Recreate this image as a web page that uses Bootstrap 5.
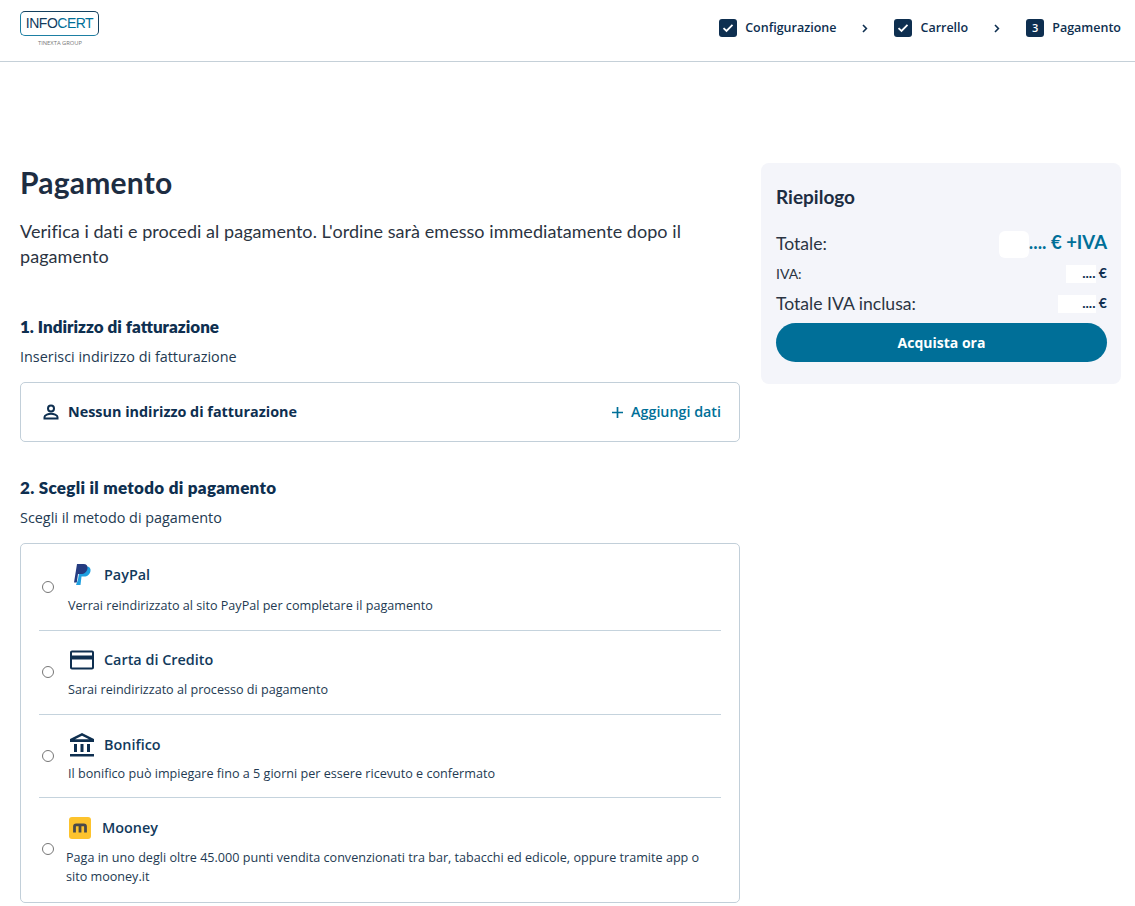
<!DOCTYPE html>
<html lang="it"><head><meta charset="utf-8"><title>Pagamento</title>
<link href="https://cdn.jsdelivr.net/npm/bootstrap@5.3.0/dist/css/bootstrap.min.css" rel="stylesheet">
<style>
body{font-family:"Open Sans","Noto Sans",sans-serif;color:#0e2f50;font-size:14px;background:#fff}
.topbar{height:62px;border-bottom:1px solid #c5d0d8;padding:0 14px 5px 20px}
.logo-wrap{width:80px;margin-top:11px}
.logo-box{height:25px;width:79px;border:1.5px solid;border-color:#14405f #14405f #1d7fa3 #1d7fa3;border-radius:5px;font-family:"Liberation Sans",sans-serif;font-size:14px;line-height:23px;text-align:center;letter-spacing:-.5px;color:#123a5c}
.logo-box b{font-weight:400;color:#006f98}
.logo-sub{font-size:5.8px;color:#777;text-align:center;line-height:8px;margin-top:3px}
.step{font-size:12.5px;font-weight:600;line-height:18px}
.step-box{width:18px;height:18px;border-radius:3px;background:#0e2f50;color:#fff;font-size:11px;font-weight:600}
.chev{margin:0 26px}
.page-main{padding:101px 14px 0 20px;gap:21px}
.leftcol{width:720px}
.rightcol{width:360px}
h1.title{font-family:"Lato",sans-serif;font-size:30px;font-weight:700;color:#1d2d42;margin:1px 0 19px;line-height:36px;letter-spacing:.2px}
.intro{font-family:"Lato",sans-serif;font-size:18px;line-height:25px;color:#2b3442;margin-bottom:47px;letter-spacing:.05px}
.sec-title{font-family:"Lato",sans-serif;font-size:17px;font-weight:800;color:#0e2f50;line-height:22px;margin-bottom:9px}
.sec-wide{letter-spacing:.29px}
.sec-sub{font-size:14.4px;line-height:20px;color:#233a52;margin-bottom:15px}
.addr{height:60px;border:1px solid #c2cfd9;border-radius:5px;padding:0 18px 0 21px;margin-bottom:35px}
.addr-name{font-weight:700;font-size:14.4px}
.add-link{color:#006f98;font-weight:600;font-size:14.3px;text-decoration:none}
.pay-list{border:1px solid #c2cfd9;border-radius:5px;padding:0 18px;height:360px}
.pay-row{border-bottom:1px solid #c5d3dd}
.pay-row:last-child{border-bottom:0}
.radio-dot{width:12px;height:12px;margin:0 14px 0 3px;flex:none}
.r2 .radio-dot{margin-bottom:2px}
.r4 .radio-dot{margin-bottom:2px}
.pay-icon{width:28px;height:24px;flex:none}
.pay-name{font-size:14.4px;font-weight:600;color:#123a5c}
.pay-desc{font-size:12.6px;line-height:19px;color:#233a52}
.pay-head{margin-bottom:9px}
.r1{height:87px}.r1 .pay-body{padding-top:19px}
.r2{height:84px}.r2 .pay-body{padding-top:17px}
.r2 .pay-head{margin-bottom:8px}
.r3{height:83px}.r3 .pay-body{padding-top:18px}
.r3 .pay-head{margin-bottom:7px}
.r4{height:104px}.r4 .pay-body{padding-top:19px;margin-left:-2px}
.r4 .pay-head{margin-bottom:9px}
.paypal-ic{margin-left:-2px;margin-right:10px}
.mooney-ic{margin-left:3px;margin-right:11px}
.summary{background:#f4f5fa;border-radius:8px;padding:0 14px 0 15px;height:221px}
.sum-title{font-family:"Lato",sans-serif;font-size:19px;font-weight:700;color:#1d2d42;padding-top:23px;line-height:22px;margin-bottom:22px}
.sum-label{font-family:"Lato",sans-serif;font-size:17.6px;color:#2b3442;font-weight:400;line-height:24px}
.sum-label.smallish{font-size:14px;font-weight:400}
.sum-total{font-family:"Lato",sans-serif;font-size:18.5px;font-weight:700;color:#006f98;line-height:24px}
.sum-val{font-family:"Lato",sans-serif;font-size:14px;font-weight:700;color:#0e2f50;line-height:18px}
.sum-r1{margin-bottom:4px}.sum-r2{margin-bottom:6px}
.blank{display:inline-block;background:#fff;vertical-align:middle}
.b1{width:30px;height:27px;border-radius:6px}
.b2{width:30px;height:18px;margin-right:-14px}
.b3{width:38px;height:18px;margin-right:-14px}
.dots{position:relative}
.buy-btn{height:39px;background:#006f98;border:0;border-radius:20px;color:#fff;font-size:14px;font-weight:700;width:100%;margin-top:7px}
</style></head>
<body>
<header class="topbar d-flex justify-content-between">
  <div class="logo-wrap">
    <div class="logo-box">INFO<b>CERT</b></div>
    <div class="logo-sub">TINEXTA GROUP</div>
  </div>
  <div class="d-flex align-items-center step">
    <span class="step-box d-flex align-items-center justify-content-center me-2"><svg width="12" height="10" viewBox="0 0 12 10"><path d="M1.5 5.2 4.500 8 10.500 1.800" fill="none" stroke="#fff" stroke-width="1.8"/></svg></span>
    <span>Configurazione</span>
    <svg class="chev" width="6" height="9" viewBox="0 0 6 9"><path d="M1 1l3.400 3.500L1 8" fill="none" stroke="#0e2f50" stroke-width="1.6"/></svg>
    <span class="step-box d-flex align-items-center justify-content-center me-2"><svg width="12" height="10" viewBox="0 0 12 10"><path d="M1.5 5.2 4.500 8 10.500 1.800" fill="none" stroke="#fff" stroke-width="1.8"/></svg></span>
    <span>Carrello</span>
    <svg class="chev" width="6" height="9" viewBox="0 0 6 9"><path d="M1 1l3.400 3.500L1 8" fill="none" stroke="#0e2f50" stroke-width="1.6"/></svg>
    <span class="step-box d-flex align-items-center justify-content-center me-2">3</span>
    <span>Pagamento</span>
  </div>
</header>
<main class="page-main d-flex align-items-start">
  <div class="leftcol">
    <h1 class="title">Pagamento</h1>
    <p class="intro">Verifica i dati e procedi al pagamento. L'ordine sarà emesso immediatamente dopo il pagamento</p>
    <div class="sec-title">1. Indirizzo di fatturazione</div>
    <div class="sec-sub">Inserisci indirizzo di fatturazione</div>
    <div class="addr d-flex align-items-center justify-content-between">
      <div class="d-flex align-items-center addr-name">
        <svg class="me-2" width="18" height="18" viewBox="0 0 18 18"><circle cx="9" cy="5.500" r="3" fill="none" stroke="#0e2f50" stroke-width="2"/><path d="M2.500 15.500v-1.500c0-2 4-3.200 6.500-3.200s6.500 1.200 6.500 3.200v1.500z" fill="none" stroke="#0e2f50" stroke-width="2"/></svg>
        Nessun indirizzo di fatturazione
      </div>
      <a class="add-link d-flex align-items-center" href="#"><svg class="me-2" width="11" height="11" viewBox="0 0 11 11"><path d="M5.500 0v11M0 5.500h11" stroke="#006f98" stroke-width="1.7"/></svg>Aggiungi dati</a>
    </div>
    <div class="sec-title sec-wide">2. Scegli il metodo di pagamento</div>
    <div class="sec-sub">Scegli il metodo di pagamento</div>
    <div class="pay-list">
      <div class="pay-row r1 d-flex align-items-center">
        <input class="radio-dot" type="radio" name="pay" aria-label="PayPal">
        <div class="pay-body align-self-start">
          <div class="d-flex align-items-center pay-head"><svg class="pay-icon paypal-ic" viewBox="0 0 28 24"><path d="M11 14.500 13 1.500h6.500c3 0 4.500 1.800 4 4.500-.6 3.500-3 5.500-6.500 5.500h-2.500L13.500 20H9z" fill="#1fa0e0" transform="translate(1 2)"/><path d="M8 19.500 11 1h6.500c3 0 4.500 1.800 4 4.500-.6 3.500-3 5.500-6.500 5.500h-3l-1.200 8.500z" fill="#253b80"/></svg><span class="pay-name">PayPal</span></div>
          <div class="pay-desc">Verrai reindirizzato al sito PayPal per completare il pagamento</div>
        </div>
      </div>
      <div class="pay-row r2 d-flex align-items-center">
        <input class="radio-dot" type="radio" name="pay" aria-label="Carta di Credito">
        <div class="pay-body align-self-start">
          <div class="d-flex align-items-center pay-head"><svg class="pay-icon me-2" viewBox="0 0 28 24"><path d="M4 2.500h20c1.100 0 2 .9 2 2v15c0 1.100-.9 2-2 2H4c-1.100 0-2-.9-2-2v-15c0-1.100.9-2 2-2zm0 2v3h20v-3zm0 7v8h20v-8z" fill="#0e2f50" fill-rule="evenodd"/></svg><span class="pay-name">Carta di Credito</span></div>
          <div class="pay-desc">Sarai reindirizzato al processo di pagamento</div>
        </div>
      </div>
      <div class="pay-row r3 d-flex align-items-center">
        <input class="radio-dot" type="radio" name="pay" aria-label="Bonifico">
        <div class="pay-body align-self-start">
          <div class="d-flex align-items-center pay-head"><svg class="pay-icon me-2" viewBox="0 0 28 24"><path d="M14 0 2 6v3h24V6zm0 2.700L21 6.300H7z" fill="#0e2f50" fill-rule="evenodd"/><path d="M6 11h3v8H6zM12.500 11h3v8h-3zM19 11h3v8h-3zM2 21h24v2.500H2z" fill="#0e2f50"/></svg><span class="pay-name">Bonifico</span></div>
          <div class="pay-desc">Il bonifico può impiegare fino a 5 giorni per essere ricevuto e confermato</div>
        </div>
      </div>
      <div class="pay-row r4 d-flex align-items-center">
        <input class="radio-dot" type="radio" name="pay" aria-label="Mooney">
        <div class="pay-body align-self-start">
          <div class="d-flex align-items-center pay-head"><svg class="mooney-ic" width="22" height="22" viewBox="0 0 22 22"><rect width="22" height="22" rx="3" fill="#fdc32d"/><path d="M5.500 15.500V9.500c0-1 .8-1.700 1.700-1.700h7.600c1 0 1.700.7 1.700 1.700v6M11 15.500V8" fill="none" stroke="#4a4a4a" stroke-width="2.800"/></svg><span class="pay-name">Mooney</span></div>
          <div class="pay-desc">Paga in uno degli oltre 45.000 punti vendita convenzionati tra bar, tabacchi ed edicole, oppure tramite app o sito mooney.it</div>
        </div>
      </div>
    </div>
  </div>
  <aside class="rightcol summary">
    <div class="sum-title">Riepilogo</div>
    <div class="d-flex justify-content-between align-items-center sum-r1"><span class="sum-label">Totale:</span><span class="sum-total"><span class="blank b1"></span>.... € +IVA</span></div>
    <div class="d-flex justify-content-between align-items-center sum-r2"><span class="sum-label smallish">IVA:</span><span class="sum-val"><span class="blank b2"></span><span class="dots">.... €</span></span></div>
    <div class="d-flex justify-content-between align-items-center"><span class="sum-label">Totale IVA inclusa:</span><span class="sum-val"><span class="blank b3"></span><span class="dots">.... €</span></span></div>
    <button class="buy-btn btn" type="button">Acquista ora</button>
  </aside>
</main>
</body></html>
